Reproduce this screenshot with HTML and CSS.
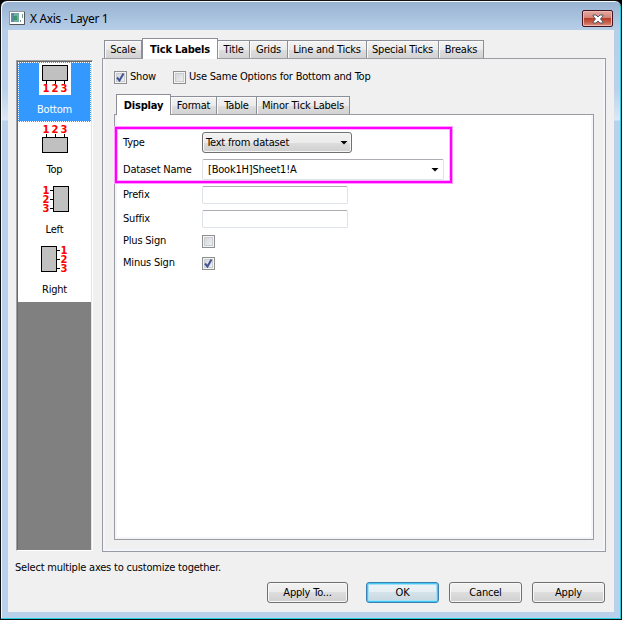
FILE: index.html
```html
<!DOCTYPE html>
<html lang="en">
<head>
<meta charset="utf-8">
<title>X Axis - Layer 1</title>
<link rel="stylesheet" href="styles.css">
</head>
<body>
<div class="window">
  <header class="titlebar">
    <svg class="app-icon" width="16" height="14" viewBox="0 0 16 14"><rect x=".5" y=".5" width="15" height="13" fill="#fff" stroke="#8d97a2"/><path d="M15.500 1v12.500H1" fill="none" stroke="#555"/><rect x="2" y="2" width="8" height="9" fill="#6fae9e"/><path d="M2 2h3v9H2z" fill="#6685ad"/><path d="M4 5h4v4H4z" fill="#3b9669"/><path d="M11.500 9v2M13.500 3v4" stroke="#799"/></svg>
    <h1 class="title">X Axis - Layer 1</h1>
    <button class="close" aria-label="Close"><svg width="12" height="10" viewBox="0 0 12 10"><path d="M1 1h3l2 2 2-2h3v1L8.500 5 11 8v1H8L6 7 4 9H1V8l2.500-3L1 2z" fill="#fff" stroke="#535666"/></svg></button>
  </header>
  <main class="client">
    <div class="columns">
      <nav class="axes">
        <div class="axis selected">
          <svg class="glyph" width="32" height="32" viewBox="0 0 32 32"><rect width="32" height="32" fill="#fff"/><path d="M7.500 17v4M16.500 17v4M25.500 17v4" stroke="#000"/><rect x="3.500" y="2.500" width="25" height="15" fill="#c0c0c0" stroke="#000"/><g class="digits"><text x="7" y="29">1</text><text x="16" y="29">2</text><text x="25" y="29">3</text></g></svg>
          <span>Bottom</span>
        </div>
        <div class="axis">
          <svg class="glyph" width="32" height="32" viewBox="0 0 32 32"><path d="M7.500 11v4M16.500 11v4M25.500 11v4" stroke="#000"/><rect x="3.500" y="14.500" width="25" height="15" fill="#c0c0c0" stroke="#000"/><g class="digits"><text x="7" y="10">1</text><text x="16" y="10">2</text><text x="25" y="10">3</text></g></svg>
          <span>Top</span>
        </div>
        <div class="axis">
          <svg class="glyph" width="32" height="32" viewBox="0 0 32 32"><path d="M11 7.500h4M11 16.500h4M11 25.500h4" stroke="#000"/><rect x="14.500" y="3.500" width="15" height="25" fill="#c0c0c0" stroke="#000"/><g class="digits"><text x="7" y="11">1</text><text x="7" y="20">2</text><text x="7" y="29">3</text></g></svg>
          <span>Left</span>
        </div>
        <div class="axis">
          <svg class="glyph" width="32" height="32" viewBox="0 0 32 32"><path d="M17 7.500h4M17 16.500h4M17 25.500h4" stroke="#000"/><rect x="2.500" y="3.500" width="15" height="25" fill="#c0c0c0" stroke="#000"/><g class="digits"><text x="25" y="11">1</text><text x="25" y="20">2</text><text x="25" y="29">3</text></g></svg>
          <span>Right</span>
        </div>
      </nav>
      <section class="pages">
        <div class="tabs outer-tabs">
          <div class="tab w-scale">Scale</div><div class="tab active w-tick">Tick Labels</div><div class="tab w-title">Title</div><div class="tab w-grids">Grids</div><div class="tab w-line">Line and Ticks</div><div class="tab w-special">Special Ticks</div><div class="tab w-breaks">Breaks</div>
        </div>
        <div class="panel outer-panel">
          <div class="options">
            <span class="check"><svg width="9" height="9" viewBox="0 0 9 9"><path d="M1 4.500 3.500 7.500 7.500 .5" fill="none" stroke="#405393" stroke-width="2"/></svg></span><span>Show</span>
            <span class="check second"></span><span>Use Same Options for Bottom and Top</span>
          </div>
          <div class="tabs inner-tabs">
            <div class="tab active w-display">Display</div><div class="tab w-format">Format</div><div class="tab w-table">Table</div><div class="tab w-minor">Minor Tick Labels</div>
          </div>
          <div class="panel form">
            <div class="highlight"></div>
            <span>Type</span>
            <div class="select"><span>Text from dataset</span><i class="arrow"></i></div>
            <span>Dataset Name</span>
            <div class="field combo"><span>[Book1H]Sheet1!A</span><i class="arrow"></i></div>
            <span>Prefix</span><div class="field"></div>
            <span>Suffix</span><div class="field"></div>
            <span>Plus Sign</span><span class="check"></span>
            <span>Minus Sign</span><span class="check"><svg width="9" height="9" viewBox="0 0 9 9"><path d="M1 4.500 3.500 7.500 7.500 .5" fill="none" stroke="#405393" stroke-width="2"/></svg></span>
          </div>
        </div>
      </section>
    </div>
    <p class="hint">Select multiple axes to customize together.</p>
    <footer class="actions">
      <button class="btn wide">Apply To...</button>
      <button class="btn primary">OK</button>
      <button class="btn">Cancel</button>
      <button class="btn">Apply</button>
    </footer>
  </main>
</div>
</body>
</html>
```
FILE: styles.css
```css
* { box-sizing: border-box; }
body { margin: 0; background: #000; font: 11px/14px "DejaVu Sans Condensed", "DejaVu Sans", sans-serif; font-stretch: condensed; letter-spacing: -.2px; color: #000; }
button { font: inherit; letter-spacing: inherit; color: inherit; padding: 0; }
.window { width: 622px; height: 620px; border: 1px solid #101010; border-radius: 7px 7px 0 0; padding: 0 5px 5px 6px; background: linear-gradient(#97b2d0 0, #b6cee8 29px, #b9d1ea 88px, #dce8f6 119px, #b9d1ea 120px); box-shadow: inset -1px -1px #24cde0, inset 1px 1px #f6f9fc; }
.titlebar { height: 29px; display: flex; align-items: flex-start; padding: 9px 3px 0 2px; }
.app-icon { display: block; margin-top: 1px; }
.title { margin: 1px auto 0 5px; font: 12px/16px "Noto Sans", sans-serif; height: 16px; letter-spacing: -.35px; white-space: nowrap; }
.close { width: 31px; height: 17px; border: 1px solid #431422; border-radius: 2px; background: linear-gradient(#e6aaa1, #d38275 47%, #b53d27 50%, #cb6754 80%, #dc9585); box-shadow: inset 0 0 0 1px #ecb9af; display: flex; align-items: center; justify-content: center; }
.client { width: 606px; height: 582px; margin-left: 1px; background: #f0f0f0; padding: 8px 8px 0; }
.columns { display: flex; gap: 9px; height: 523px; }
.axes { width: 77px; height: 491px; margin-top: 22px; background: #808080; border: 1px solid #a0a0a0; border-color: #a0a0a0 #fff #fff #a0a0a0; box-shadow: inset 1px 1px #696969, inset -1px 0 #e3e3e3; padding: 1px 1px 0; }
.axis { height: 60px; background: #fff; display: flex; flex-direction: column; align-items: center; padding-top: 1px; }
.axis span { margin-top: 8px; }
.axis.selected { background: #3399ff; color: #fff; outline: 1px dotted #fff; outline-offset: -1px; }
.glyph { display: block; flex: none; }
.digits { font: bold 10px "DejaVu Sans", sans-serif; letter-spacing: 0; text-anchor: middle; fill: #f00; }
.pages { width: 504px; }
.tabs { display: flex; align-items: flex-end; height: 21px; position: relative; z-index: 1; white-space: nowrap; }
.outer-tabs { padding-left: 2px; }
.inner-tabs { padding-left: 2px; }
.tab { height: 18px; margin-bottom: 1px; border: 1px solid #8c8e98; border-bottom: 0; border-left-width: 0; background: linear-gradient(#f3f3f3, #ebebeb 50%, #dedede 52%, #d2d2d2); box-shadow: inset 1px 1px #fafafa; line-height: 17px; text-align: center; }
.tab:first-child { border-left-width: 1px; }
.tab.active { height: 21px; margin-bottom: 0; background: #fff; border-left-width: 1px; font-weight: bold; line-height: 21px; box-shadow: none; }
.w-scale { width: 38px; }
.w-tick { width: 76px; }
.w-title { width: 32px; }
.w-grids { width: 38px; }
.w-line { width: 79px; }
.w-special { width: 72px; }
.w-breaks { width: 45px; }
.w-display { width: 55px; }
.w-format { width: 46px; }
.w-table { width: 40px; }
.w-minor { width: 93px; }
.panel { border: 1px solid #9a9ca2; box-shadow: inset 2px 0 #f3f5fb, inset -2px -2px #f3f5fb; }
.outer-panel { height: 494px; margin-top: -1px; padding: 11px 11px 0; }
.options { display: flex; align-items: center; height: 14px; margin-bottom: 10px; }
.check { display: flex; align-items: center; justify-content: center; width: 13px; height: 13px; border: 1px solid #8e8f8f; background: linear-gradient(135deg, #cbcfd5, #f6f6f6); box-shadow: inset 0 0 0 1px #f4f4f4, inset 0 0 0 2px #c9cdd2; }
.options .check { flex: none; margin-right: 3px; }
.options .second { margin-left: 17px; }
.form { height: 426px; margin-top: -1px; background: #fff; position: relative; display: grid; grid-template-columns: 79px 1fr; grid-template-rows: 27px 27px 24px 23px 22px 22px; align-content: start; align-items: center; padding: 14px 8px 0; }
.highlight { position: absolute; left: 0; top: 12px; width: 337px; height: 56px; border: 2px solid #f0f; box-shadow: 0 0 0 1px #ff9cff, inset 0 0 0 1px #ffb4ff; }
.select { width: 150px; height: 21px; border: 1px solid #707070; border-radius: 3px; background: linear-gradient(#f2f2f2, #ebebeb 50%, #dddddd 52%, #cfcfcf); box-shadow: inset 0 0 0 1px #f6f6f6; display: flex; align-items: center; justify-content: space-between; padding: 0 3px; }
.arrow { width: 8px; height: 4px; background: #000; clip-path: polygon(0 0, 100% 0, 50% 100%); }
.field { width: 146px; height: 18px; border: 1px solid #e1e3ea; border-color: #abadb3 #dfe3ea #dfe3ea; border-radius: 2px; }
.combo { width: 242px; height: 21px; display: flex; align-items: center; justify-content: space-between; padding: 0 4px 0 5px; }
.hint { margin: 0 0 0 -1px; height: 14px; width: 230px; white-space: nowrap; }
.actions { display: flex; justify-content: flex-end; margin-top: 7px; padding-right: 1px; gap: 10px; }
.btn { width: 73px; height: 21px; border: 1px solid #707070; border-radius: 3px; background: linear-gradient(#f2f2f2, #ebebeb 49%, #dddddd 50%, #cfcfcf); box-shadow: inset 0 0 0 1px #f8f8f8; line-height: 19px; }
.wide { width: 81px; margin-right: 8px; }
.primary { border-color: #3c7fb1; box-shadow: inset 0 0 0 1px #43c8f3, inset 0 0 0 2px #a5e0f4; background: linear-gradient(#eef4f7, #e4eef3 49%, #d4e2e9 50%, #c8d8e0); }
```
